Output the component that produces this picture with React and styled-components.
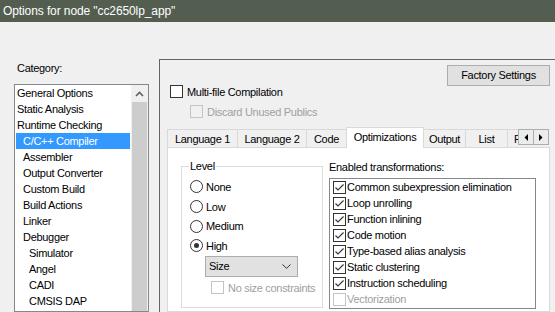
import React from "react";
import styled, { createGlobalStyle } from "styled-components";

const GlobalStyle = createGlobalStyle`
  html, body {
    margin: 0;
    padding: 0;
  }
  body {
    background: #f0f0f0;
    font-family: "Liberation Sans", Arial, sans-serif;
    font-size: 11px;
    letter-spacing: -0.3px;
    color: #000;
    overflow: hidden;
  }
  * {
    box-sizing: border-box;
  }
`;

const Window = styled.div`
  width: 555px;
  height: 312px;
  overflow: hidden;
  display: flex;
  flex-direction: column;
`;

const TitleBar = styled.div`
  flex: none;
  height: 22px;
  padding-left: 3px;
  background: #535e51;
  color: #fff;
  font-size: 12px;
  letter-spacing: -0.1px;
  line-height: 22px;
  white-space: nowrap;
`;

const Body = styled.div`
  flex: 1;
  min-height: 0;
  display: flex;
  gap: 10px;
  padding-top: 37px;
`;

const Sidebar = styled.div`
  flex: none;
  width: 135px;
  margin-left: 14px;
  display: flex;
  flex-direction: column;
`;

const FieldLabel = styled.div`
  line-height: 13px;
  padding: ${(p) => p.$pad || "0"};
  margin-bottom: ${(p) => p.$gap || 0}px;
  white-space: nowrap;
`;

const ListBox = styled.div`
  display: flex;
  height: 260px;
  background: #fff;
  border: 1px solid #828790;
`;

const ListItems = styled.div`
  flex: 1;
  padding: 0 1px;
`;

const CategoryItem = styled.div`
  height: 16px;
  line-height: 16px;
  padding-left: ${(p) => 1 + p.$depth * 6}px;
  white-space: nowrap;
  background: ${(p) => (p.$selected ? "#3399ff" : "transparent")};
  color: ${(p) => (p.$selected ? "#fff" : "#000")};
`;

const ScrollBar = styled.div`
  flex: none;
  width: 17px;
  display: flex;
  flex-direction: column;
  background: #f0f0f0;
`;

const ScrollArrow = styled.div`
  height: 17px;
  display: flex;
  align-items: center;
  justify-content: center;
`;

const ScrollThumb = styled.div`
  flex: 1;
  margin: 0 1px;
  background: #cdcdcd;
`;

const RightPane = styled.div`
  flex: 1;
  display: flex;
  flex-direction: column;
  padding: 5px 5px 0 7px;
  border-top: 1px solid #646464;
  border-left: 1px solid #646464;
`;

const Header = styled.div`
  display: flex;
  justify-content: space-between;
  align-items: flex-start;
`;

const CheckStack = styled.div`
  display: flex;
  flex-direction: column;
  gap: 3px;
  margin: 18px 0 0 3px;
`;

const CheckRow = styled.label`
  display: flex;
  align-items: center;
  gap: ${(p) => p.$gap ?? 4}px;
  height: ${(p) => p.$height || 17}px;
  padding-left: ${(p) => p.$indent || 0}px;
  margin-left: ${(p) => p.$offset || 0}px;
  margin-top: ${(p) => p.$top || 0}px;
  white-space: nowrap;
  color: ${(p) => (p.$disabled ? "#a0a0a0" : "#000")};
`;

const Box = styled.span`
  flex: none;
  width: 13px;
  height: 13px;
  display: flex;
  align-items: center;
  justify-content: center;
  background: ${(p) => (p.$disabled ? "transparent" : "#fff")};
  border: 1px solid ${(p) => (p.$disabled ? "#c4c4c4" : "#333")};
`;

const Button = styled.div`
  width: 103px;
  height: 21px;
  line-height: 19px;
  text-align: center;
  background: #e1e1e1;
  border: 1px solid #adadad;
  white-space: nowrap;
`;

const TabRow = styled.div`
  position: relative;
  z-index: 1;
  display: flex;
  height: 21px;
  margin-top: 7px;
`;

const TabViewport = styled.div`
  width: 351px;
  display: flex;
  align-items: flex-start;
  overflow: hidden;
`;

const Tab = styled.div`
  flex: none;
  width: ${(p) => p.$width}px;
  height: ${(p) => (p.$active ? 21 : 18)}px;
  margin-top: ${(p) => (p.$active ? 0 : 2)}px;
  margin-right: -1px;
  padding-top: 1px;
  line-height: 17px;
  text-align: center;
  white-space: nowrap;
  background: ${(p) => (p.$active ? "#fff" : "#f0f0f0")};
  border: 1px solid #d9d9d9;
  border-bottom: none;
  position: relative;
  z-index: ${(p) => (p.$active ? 1 : 0)};
`;

const Spinner = styled.div`
  display: flex;
  margin-top: 2px;
`;

const SpinButton = styled.div`
  width: 16px;
  height: 16px;
  display: flex;
  align-items: center;
  justify-content: center;
  background: #ececec;
  border: 1px solid #adadad;
  & + & {
    margin-left: -1px;
  }
`;

const TabPanel = styled.div`
  flex: 1;
  margin-top: -1px;
  background: #fff;
  border: 1px solid #d9d9d9;
  display: flex;
  align-items: flex-start;
  gap: 6px;
  padding: 11px 0 0 13px;
`;

const GroupBox = styled.fieldset`
  width: 142px;
  margin: 1px 0 0 0;
  min-width: 0;
  padding: 4px 0 10px 7px;
  border: 1px solid #dcdcdc;
`;

const Legend = styled.legend`
  padding: 0 1px;
  line-height: 13px;
`;

const RadioRow = styled.div`
  display: flex;
  align-items: center;
  gap: 3px;
  height: 19.7px;
  margin-left: 1px;
`;

const RadioCircle = styled.span`
  flex: none;
  width: 13px;
  height: 13px;
  border-radius: 50%;
  border: 1px solid #333;
  background: #fff;
  display: flex;
  align-items: center;
  justify-content: center;
  &::after {
    content: "";
    width: 5px;
    height: 5px;
    border-radius: 50%;
    background: ${(p) => (p.$checked ? "#333" : "transparent")};
  }
`;

const Select = styled.div`
  width: 93px;
  height: 21px;
  margin-left: 16px;
  display: flex;
  align-items: center;
  justify-content: space-between;
  padding: 0 6px 0 3px;
  background: #e1e1e1;
  border: 1px solid #adadad;
`;

const Column = styled.div`
  display: flex;
  flex-direction: column;
  margin-top: 2px;
`;

const TransformList = styled.div`
  width: 207px;
  height: 131px;
  padding-left: 3px;
  background: #fff;
  border: 1px solid #828790;
`;

const categories = [
  ["General Options", 0],
  ["Static Analysis", 0],
  ["Runtime Checking", 0],
  ["C/C++ Compiler", 1, true],
  ["Assembler", 1],
  ["Output Converter", 1],
  ["Custom Build", 1],
  ["Build Actions", 1],
  ["Linker", 1],
  ["Debugger", 1],
  ["Simulator", 2],
  ["Angel", 2],
  ["CADI", 2],
  ["CMSIS DAP", 2],
];

const tabs = [
  ["Language 1", 71],
  ["Language 2", 70],
  ["Code", 41],
  ["Optimizations", 78, true],
  ["Output", 43],
  ["List", 43],
  ["Preprocessor", 76],
];

const levels = ["None", "Low", "Medium", "High"];

const transforms = [
  "Common subexpression elimination",
  "Loop unrolling",
  "Function inlining",
  "Code motion",
  "Type-based alias analysis",
  "Static clustering",
  "Instruction scheduling",
];

const CheckMark = () => (
  <svg width="11" height="11" viewBox="0 0 11 11">
    <polyline points="1.5,5.5 4,8 9.5,2.5" fill="none" stroke="#333" strokeWidth="1.1" />
  </svg>
);

const CheckBox = ({ checked, disabled }) => (
  <Box $disabled={disabled}>{checked && <CheckMark />}</Box>
);

export default function App() {
  return (
    <Window>
      <GlobalStyle />
      <TitleBar>Options for node "cc2650lp_app"</TitleBar>
      <Body>
        <Sidebar>
          <FieldLabel $pad="3px 0 0 3px" $gap={9}>
            Category:
          </FieldLabel>
          <ListBox>
            <ListItems>
              {categories.map(([name, depth, selected]) => (
                <CategoryItem key={name} $depth={depth} $selected={selected}>
                  {name}
                </CategoryItem>
              ))}
            </ListItems>
            <ScrollBar>
              <ScrollArrow>
                <svg width="9" height="6" viewBox="0 0 9 6">
                  <polyline points="1,5 4.5,1.5 8,5" fill="none" stroke="#606060" strokeWidth="1.6" />
                </svg>
              </ScrollArrow>
              <ScrollThumb />
            </ScrollBar>
          </ListBox>
        </Sidebar>

        <RightPane>
          <Header>
            <CheckStack>
              <CheckRow>
                <CheckBox />
                Multi-file Compilation
              </CheckRow>
              <CheckRow $indent={20} $disabled>
                <CheckBox disabled />
                Discard Unused Publics
              </CheckRow>
            </CheckStack>
            <Button>Factory Settings</Button>
          </Header>

          <TabRow>
            <TabViewport>
              {tabs.map(([name, width, active]) => (
                <Tab key={name} $width={width} $active={active}>
                  {name}
                </Tab>
              ))}
            </TabViewport>
            <Spinner>
              <SpinButton>
                <svg width="4" height="7" viewBox="0 0 4 7">
                  <polygon points="4,0 0.5,3.5 4,7" fill="#000" />
                </svg>
              </SpinButton>
              <SpinButton>
                <svg width="4" height="7" viewBox="0 0 4 7">
                  <polygon points="0,0 3.5,3.5 0,7" fill="#000" />
                </svg>
              </SpinButton>
            </Spinner>
          </TabRow>

          <TabPanel>
            <GroupBox>
              <Legend>Level</Legend>
              {levels.map((lvl) => (
                <RadioRow key={lvl}>
                  <RadioCircle $checked={lvl === "High"} />
                  {lvl}
                </RadioRow>
              ))}
              <Select>
                Size
                <svg width="9" height="5" viewBox="0 0 9 5">
                  <polyline points="0.5,0.5 4.5,4.3 8.5,0.5" fill="none" stroke="#333" strokeWidth="1" />
                </svg>
              </Select>
              <CheckRow $offset={22} $top={2} $height={18} $disabled>
                <CheckBox disabled />
                No size constraints
              </CheckRow>
            </GroupBox>

            <Column>
              <FieldLabel $gap={4}>Enabled transformations:</FieldLabel>
              <TransformList>
                {transforms.map((t) => (
                  <CheckRow key={t} $height={16} $gap={1}>
                    <CheckBox checked />
                    {t}
                  </CheckRow>
                ))}
                <CheckRow $height={16} $gap={1} $disabled>
                  <CheckBox disabled />
                  Vectorization
                </CheckRow>
              </TransformList>
            </Column>
          </TabPanel>
        </RightPane>
      </Body>
    </Window>
  );
}
